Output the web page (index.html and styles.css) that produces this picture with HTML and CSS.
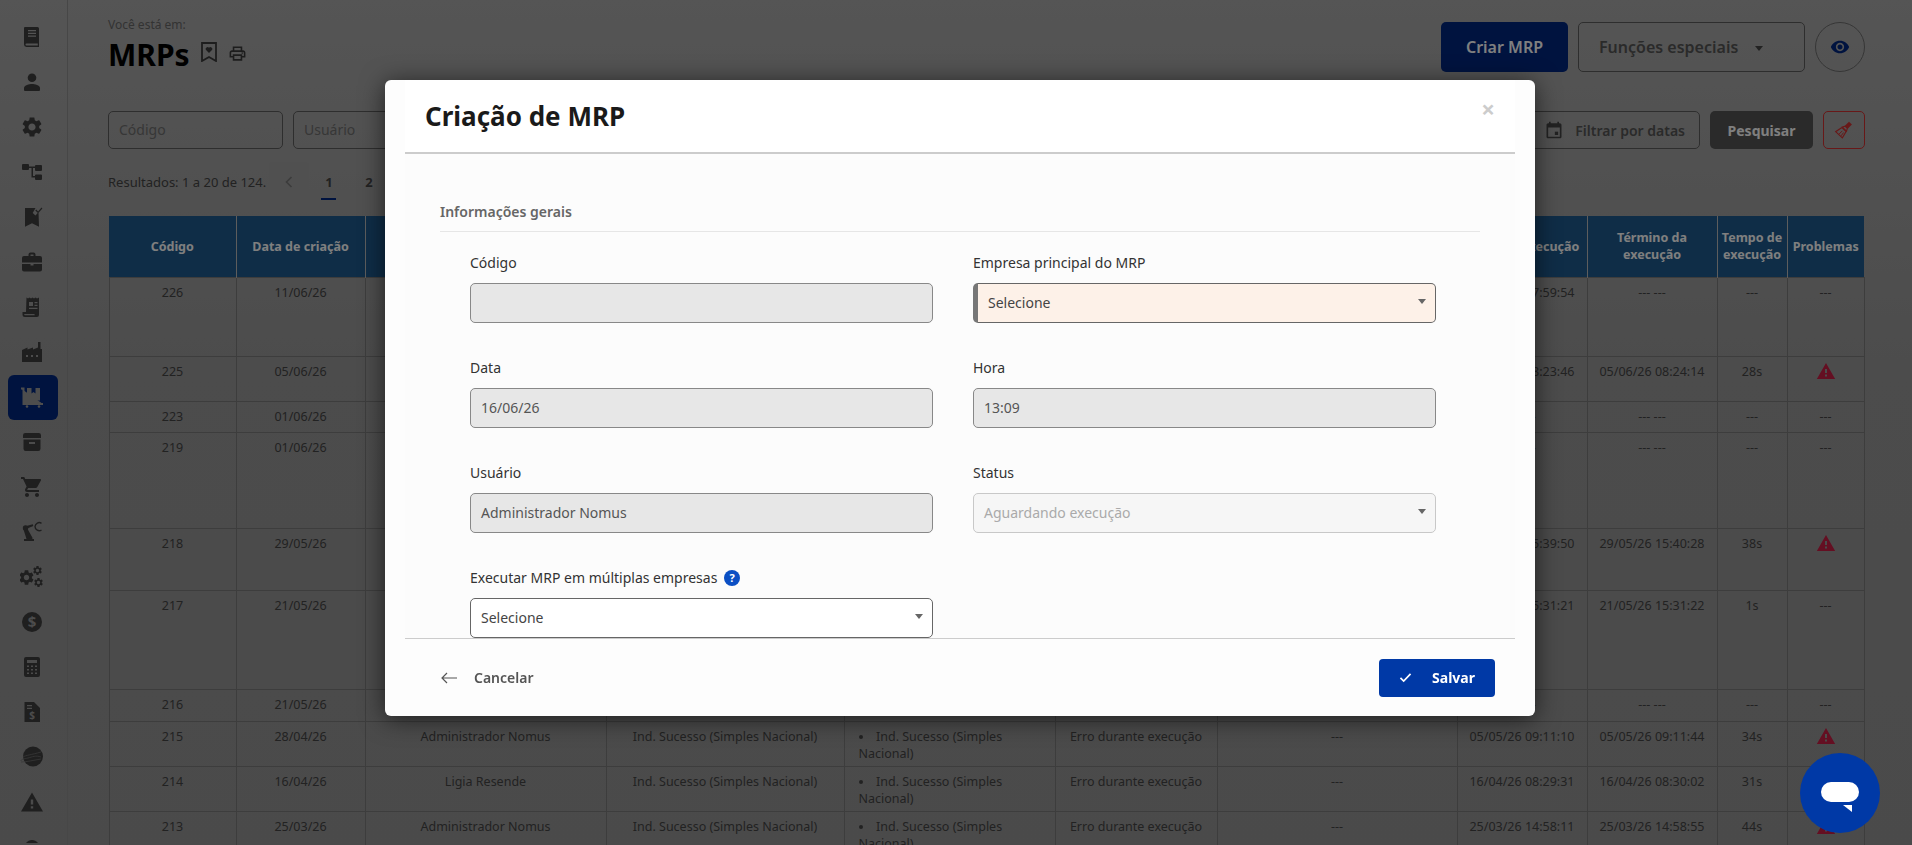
FILE: index.html
```html
<!DOCTYPE html>
<html>
<head>
<title>MRPs</title>
<link rel="stylesheet" href="styles.css">
</head>
<body>
<svg class="defs" width="0" height="0">
	<symbol id="i-gear" viewBox="0 0 24 24"><path d="M19.14 12.94c.04-.3.06-.61.06-.94 0-.32-.02-.64-.07-.94l2.03-1.58c.18-.14.23-.41.12-.61l-1.92-3.32c-.12-.22-.37-.29-.59-.22l-2.39.96c-.5-.38-1.03-.7-1.62-.94l-.36-2.54c-.04-.24-.24-.41-.48-.41h-3.84c-.24 0-.43.17-.47.41l-.36 2.54c-.59.24-1.13.57-1.62.94l-2.39-.96c-.22-.08-.47 0-.59.22L2.74 8.87c-.12.21-.08.47.12.61l2.03 1.58c-.05.3-.09.63-.09.94s.02.64.07.94l-2.03 1.58c-.18.14-.23.41-.12.61l1.92 3.32c.12.22.37.29.59.22l2.39-.96c.5.38 1.03.7 1.62.94l.36 2.54c.05.24.24.41.48.41h3.84c.24 0 .44-.17.47-.41l.36-2.54c.59-.24 1.13-.56 1.62-.94l2.39.96c.22.08.47 0 .59-.22l1.92-3.32c.12-.22.07-.47-.12-.61l-2.01-1.58zM12 15.6c-1.98 0-3.6-1.62-3.6-3.6s1.62-3.6 3.6-3.6 3.6 1.62 3.6 3.6-1.62 3.6-3.6 3.6z"/></symbol>
	<symbol id="i-warn" viewBox="0 0 24 24"><path d="M12 2.5 1 21.5h22zM13.2 18.5h-2.4v-2.3h2.4zm0-4h-2.4V9.5h2.4z"/></symbol>
</svg>

<div class="page">
	<nav class="sidebar">
		<a class="nav-item"><svg viewBox="0 0 24 24"><path d="M5 2h12.5A1.5 1.5 0 0 1 19 3.5V22H6.5a2.5 2.5 0 0 1-2.5-2.4V3a1 1 0 0 1 1-1zm3 3v1.2h8V5zm0 2.8V9h8V7.8zm0 2.8v1.2h8v-1.2zM6.5 18.6a1 1 0 0 0 0 2H17.800v-2z"/></svg></a>
		<a class="nav-item"><svg viewBox="0 0 24 24"><circle cx="12" cy="7.800" r="4.300"/><path d="M4 20v-2c0-2.700 5.300-4 8-4s8 1.300 8 4v2a1 1 0 0 1-1 1H5a1 1 0 0 1-1-1z"/></svg></a>
		<a class="nav-item"><svg viewBox="0 0 24 24"><use href="#i-gear"/></svg></a>
		<a class="nav-item"><svg viewBox="0 0 24 24"><path d="M3 4h5a1 1 0 0 1 1 1v1.500h6V6a1 1 0 0 1 1-1h5a1 1 0 0 1 1 1v4a1 1 0 0 1-1 1h-5a1 1 0 0 1-1-1V8H13v8h2v-.5a1 1 0 0 1 1-1h5a1 1 0 0 1 1 1V19a1 1 0 0 1-1 1h-5a1 1 0 0 1-1-1v-1.500h-3.500V8H9v1a1 1 0 0 1-1 1H3a1 1 0 0 1-1-1V5a1 1 0 0 1 1-1z"/></svg></a>
		<a class="nav-item"><svg viewBox="0 0 24 24"><path d="M5 3h10.500l-2.800 5 2.800 2.500 3-3.500L19 21.800l-7-3.600-7 3.600zM16.200 4.600l1.900 1.900 3.400-3.900.9.800-4.300 4.900-2.800-2.800z"/></svg></a>
		<a class="nav-item"><svg viewBox="0 0 24 24"><path d="M8.500 6V4.500A2 2 0 0 1 10.500 2.500h3a2 2 0 0 1 2 2V6H20a2 2 0 0 1 2 2v4.500H2V8a2 2 0 0 1 2-2zm2-1.500V6h3V4.500zM2 14h8.500v1.500h3V14H22v5.500a2 2 0 0 1-2 2H4a2 2 0 0 1-2-2z"/></svg></a>
		<a class="nav-item"><svg viewBox="0 0 24 24"><path d="M6.500 2.500 8 3.500l1.500-1 1.500 1 1.500-1 1.500 1 1.500-1 1.500 1 2-1V20a2 2 0 0 1-2 2H5a2.500 2.500 0 0 1-2.500-2.500V17H6zM9 7v4h4V7zm5.500 0v1.300h3V7zm0 2.700V11h3V9.700zM9 12.800v1.300h8.500v-1.300zm-4.800 6.100c0 .6.400 1.300 1.300 1.300h9.300a2 2 0 0 1-.3-1.300z"/></svg></a>
		<a class="nav-item"><svg viewBox="0 0 24 24"><path d="M18 2h2.500v7H22v13H2V10l5.500-2.500v2L13 7.500v2L18 7.500zM6 15v2h2v-2zm5 0v2h2v-2zm5 0v2h2v-2z"/></svg></a>
		<a class="nav-item nav-active"><svg viewBox="0 0 24 24" fill="none" stroke="currentColor" stroke-width="2"><path d="M1 3.500h2.500v15.500H23"/><circle cx="7" cy="21.500" r="1.300" fill="currentColor" stroke="none"/><circle cx="19" cy="21.500" r="1.300" fill="currentColor" stroke="none"/><path d="M7 3h13v12.500H7zM11.500 3v5.500l2-1.500 2 1.500V3" fill="currentColor" stroke="none"/></svg></a>
		<a class="nav-item"><svg viewBox="0 0 24 24"><path d="M3 5.200A2.200 2.200 0 0 1 5.200 3h13.600A2.200 2.200 0 0 1 21 5.200V8H3zM3.500 9.500h17v9.300a2.200 2.200 0 0 1-2.200 2.200H5.700a2.200 2.200 0 0 1-2.200-2.200zM9 12v2h6v-2z"/></svg></a>
		<a class="nav-item"><svg viewBox="0 0 24 24"><path d="M7 18c-1.100 0-1.990.9-1.990 2S5.900 22 7 22s2-.9 2-2-.9-2-2-2zM1 2v2h2l3.600 7.590-1.350 2.450c-.16.28-.25.61-.25.96 0 1.100.9 2 2 2h12v-2H7.420c-.14 0-.25-.11-.25-.25l.03-.12.9-1.630h7.450c.75 0 1.410-.41 1.750-1.030l3.580-6.490c.08-.14.12-.31.12-.48 0-.55-.45-1-1-1H5.210l-.94-2H1zm16 16c-1.100 0-1.990.9-1.990 2s.89 2 1.990 2 2-.9 2-2-.9-2-2-2z"/></svg></a>
		<a class="nav-item"><svg viewBox="0 0 24 24"><path d="M4 21v-2h2.500L3.500 9.500a2.300 2.300 0 0 1 1.800-3.300l7.500-2 .5 1.900-6 2.300 4.200 7.600.9 1.500V19H14v2z"/><circle cx="5.500" cy="8" r="2.700"/><path d="M21.500 3.300A4.200 4.200 0 0 0 15 6.500a4.200 4.200 0 0 0 6.500 3.500" fill="none" stroke="currentColor" stroke-width="1.400"/></svg></a>
		<a class="nav-item"><svg viewBox="0 0 24 24"><use href="#i-gear" x="-2.500" y="3.500" width="18" height="18"/><use href="#i-gear" x="12" y="0" width="11" height="11"/><use href="#i-gear" x="13" y="12" width="11" height="11"/></svg></a>
		<a class="nav-item"><svg viewBox="0 0 24 24"><circle cx="12" cy="12" r="10"/><text class="nav-dollar" x="12" y="17" text-anchor="middle">$</text></svg></a>
		<a class="nav-item"><svg viewBox="0 0 24 24"><path d="M6 2h12a2 2 0 0 1 2 2v16a2 2 0 0 1-2 2H6a2 2 0 0 1-2-2V4a2 2 0 0 1 2-2zm1 3v3h10V5zm0 5.500V12h2v-1.500zm4 0V12h2v-1.500zm4 0V12h2v-1.500zM7 14v1.500h2V14zm4 0v1.500h2V14zm4 0v1.500h2V14zM7 17.500V19h2v-1.500zm4 0V19h2v-1.500zm4 0V19h2v-1.500z"/></svg></a>
		<a class="nav-item"><svg viewBox="0 0 24 24"><path d="M4.500 2H14l6 6v14H4.500zM7 5v1.300h5V5zm0 2.800v1.300h5V7.800z"/><text class="nav-file-dollar" x="12.200" y="19" text-anchor="middle">$</text></svg></a>
		<a class="nav-item"><svg viewBox="0 0 24 24"><circle cx="13" cy="11.500" r="10"/><path d="M1 16c0-2 3-2 7-3s8-3 13-1" fill="none" stroke="#6e6e6e" stroke-width=".8"/><path d="M3 12c3-2 8-2 18-5M1 17c5 0 14-2 20-3" fill="none" stroke="#6e6e6e" stroke-width=".8"/></svg></a>
		<a class="nav-item"><svg viewBox="0 0 24 24"><use href="#i-warn"/></svg></a>
		<a class="nav-item"><svg viewBox="0 0 24 24"><path d="M6 8c3-4 9-4 12 0z"/></svg></a>
	</nav>

	<main class="content">
		<header class="top">
			<div class="title-block">
				<div class="breadcrumb">Você está em:</div>
				<div class="title-row">
					<h1>MRPs</h1>
					<svg class="ico-bookmark" viewBox="0 0 16 20"><path d="M1 1h14v18l-7-4-7 4z" fill="none" stroke="currentColor" stroke-width="1.800"/><path d="M8 11 4.800 7.800a1.900 1.900 0 0 1 3.200-2 1.900 1.900 0 0 1 3.200 2z"/></svg>
					<svg class="ico-print" viewBox="0 0 24 24"><path d="M19 8h-1V3H6v5H5c-1.660 0-3 1.340-3 3v6h4v4h12v-4h4v-6c0-1.660-1.340-3-3-3zM8 5h8v3H8V5zm8 12v2H8v-4h8v2zm2-2v-2H6v2H4v-4c0-.55.45-1 1-1h14c.55 0 1 .45 1 1v4h-2z"/><circle cx="18" cy="11.500" r="1"/></svg>
				</div>
			</div>
			<div class="top-actions">
				<button class="btn btn-navy">Criar MRP</button>
				<button class="btn btn-outline">Funções especiais <span class="caret"></span></button>
				<button class="btn-eye"><svg viewBox="0 0 24 24"><path d="M12 4.500C7 4.500 2.730 7.610 1 12c1.730 4.390 6 7.500 11 7.500s9.270-3.110 11-7.500c-1.730-4.390-6-7.500-11-7.500zM12 17c-2.760 0-5-2.240-5-5s2.240-5 5-5 5 2.240 5 5-2.240 5-5 5zm0-8c-1.660 0-3 1.340-3 3s1.340 3 3 3 3-1.340 3-3-1.340-3-3-3z"/></svg></button>
			</div>
		</header>

		<div class="filters">
			<div class="filter-input">Código</div>
			<div class="filter-input">Usuário</div>
			<button class="btn-date"><svg viewBox="0 0 24 24"><path d="M19 4h-1V2h-2v2H8V2H6v2H5C3.900 4 3 4.900 3 6v14c0 1.100.9 2 2 2h14c1.100 0 2-.9 2-2V6c0-1.100-.9-2-2-2zm0 16H5V9h14v11z"/><path d="M13 14h4v4h-4z"/></svg>Filtrar por datas</button>
			<button class="btn-search">Pesquisar</button>
			<button class="btn-clear"><svg viewBox="0 0 24 24"><path d="m13 7 5-5 3.500 3.500-5 5z" fill="currentColor"/><path d="M13.500 7.500 16 10l-1 3.500-5-5zM9.500 9 14.500 14 10 21.500 2 14z" fill="none" stroke="currentColor" stroke-width="1.400"/><path d="m6 17 4-4M8.500 19l3-4" fill="none" stroke="currentColor" stroke-width="1.200"/></svg></button>
		</div>

		<div class="results">
			<span class="results-text">Resultados: 1 a 20 de 124.</span>
			<div class="pager">
				<span class="page-prev"><svg viewBox="0 0 10 14"><path d="M7.500 2 2.500 7l5 5" fill="none" stroke="currentColor" stroke-width="1.600"/></svg></span>
				<span class="page-num page-current">1</span>
				<span class="page-num">2</span>
			</div>
		</div>

		<table class="grid">
			<colgroup>
				<col class="c1"><col class="c2"><col class="c3"><col class="c4"><col class="c5"><col class="c6"><col class="c7"><col class="c8"><col class="c8"><col class="c9"><col class="c10">
			</colgroup>
			<thead>
				<tr><th>Código</th><th>Data de criação</th><th>Usuário</th><th>Empresa principal</th><th>Empresas</th><th>Status</th><th>Observações</th><th class="one-line">Início da execução</th><th>Término da execução</th><th>Tempo de execução</th><th>Problemas</th></tr>
			</thead>
			<tbody>
				<tr class="r79"><td>226</td><td>11/06/26</td><td></td><td></td><td></td><td></td><td></td><td>11/06/26 07:59:54</td><td>--- ---</td><td>---</td><td>---</td></tr>
				<tr class="r45"><td>225</td><td>05/06/26</td><td></td><td></td><td></td><td></td><td></td><td>05/06/26 08:23:46</td><td>05/06/26 08:24:14</td><td>28s</td><td><svg class="warn"><use href="#i-warn"/></svg></td></tr>
				<tr class="r31"><td>223</td><td>01/06/26</td><td></td><td></td><td></td><td></td><td></td><td>--- ---</td><td>--- ---</td><td>---</td><td>---</td></tr>
				<tr class="r96"><td>219</td><td>01/06/26</td><td></td><td></td><td></td><td></td><td></td><td>--- ---</td><td>--- ---</td><td>---</td><td>---</td></tr>
				<tr class="r62"><td>218</td><td>29/05/26</td><td></td><td></td><td></td><td></td><td></td><td>29/05/26 15:39:50</td><td>29/05/26 15:40:28</td><td>38s</td><td><svg class="warn"><use href="#i-warn"/></svg></td></tr>
				<tr class="r99"><td>217</td><td>21/05/26</td><td></td><td></td><td></td><td></td><td></td><td>21/05/26 15:31:21</td><td>21/05/26 15:31:22</td><td>1s</td><td>---</td></tr>
				<tr class="r32"><td>216</td><td>21/05/26</td><td></td><td></td><td></td><td></td><td></td><td>--- ---</td><td>--- ---</td><td>---</td><td>---</td></tr>
				<tr class="r45"><td>215</td><td>28/04/26</td><td>Administrador Nomus</td><td>Ind. Sucesso (Simples Nacional)</td><td class="cell-list"><ul><li>Ind. Sucesso (Simples Nacional)</li></ul></td><td>Erro durante execução</td><td>---</td><td>05/05/26 09:11:10</td><td>05/05/26 09:11:44</td><td>34s</td><td><svg class="warn"><use href="#i-warn"/></svg></td></tr>
				<tr class="r45"><td>214</td><td>16/04/26</td><td>Ligia Resende</td><td>Ind. Sucesso (Simples Nacional)</td><td class="cell-list"><ul><li>Ind. Sucesso (Simples Nacional)</li></ul></td><td>Erro durante execução</td><td>---</td><td>16/04/26 08:29:31</td><td>16/04/26 08:30:02</td><td>31s</td><td><svg class="warn"><use href="#i-warn"/></svg></td></tr>
				<tr class="r45"><td>213</td><td>25/03/26</td><td>Administrador Nomus</td><td>Ind. Sucesso (Simples Nacional)</td><td class="cell-list"><ul><li>Ind. Sucesso (Simples Nacional)</li></ul></td><td>Erro durante execução</td><td>---</td><td>25/03/26 14:58:11</td><td>25/03/26 14:58:55</td><td>44s</td><td><svg class="warn"><use href="#i-warn"/></svg></td></tr>
			</tbody>
		</table>
	</main>
</div>

<div class="overlay"></div>

<div class="modal">
	<div class="modal-head">
		<h2>Criação de MRP</h2>
		<span class="modal-close">×</span>
	</div>
	<div class="modal-body">
		<h3 class="section-title">Informações gerais</h3>
		<div class="form-grid">
			<div class="field">
				<label>Código</label>
				<div class="control control-off"></div>
			</div>
			<div class="field">
				<label>Empresa principal do MRP</label>
				<div class="control control-required">Selecione<span class="caret"></span></div>
			</div>
			<div class="field">
				<label>Data</label>
				<div class="control control-off">16/06/26</div>
			</div>
			<div class="field">
				<label>Hora</label>
				<div class="control control-off">13:09</div>
			</div>
			<div class="field">
				<label>Usuário</label>
				<div class="control control-off">Administrador Nomus</div>
			</div>
			<div class="field">
				<label>Status</label>
				<div class="control control-muted">Aguardando execução<span class="caret"></span></div>
			</div>
			<div class="field">
				<label>Executar MRP em múltiplas empresas <span class="help">?</span></label>
				<div class="control">Selecione<span class="caret"></span></div>
			</div>
		</div>
	</div>
	<div class="modal-foot">
		<a class="btn-cancel"><svg viewBox="0 0 16 12"><path d="M16 6H1.500M6 1 1 6l5 5" fill="none" stroke="currentColor" stroke-width="1.200"/></svg>Cancelar</a>
		<button class="btn-save"><svg viewBox="0 0 14 12"><path d="m1.500 6.500 3.500 3.500 7.500-8" fill="none" stroke="currentColor" stroke-width="1.800"/></svg>Salvar</button>
	</div>
</div>

<div class="chat">
	<span class="chat-pill"></span>
	<span class="chat-tail"></span>
</div>
</body>
</html>
```

FILE: styles.css
```css
* {
	box-sizing: border-box;
}
html, body {
	margin: 0;
	height: 100%;
	overflow: hidden;
}
body {
	font-family: "Noto Sans", "Open Sans", sans-serif;
	font-size: 14px;
	color: #444;
}
button {
	font-family: inherit;
	cursor: pointer;
}
.defs {
	position: absolute;
}

/* page under the dialog: colours are double the seen value because of the overlay */
.page {
	display: flex;
	height: 845px;
	overflow: hidden;
	background: linear-gradient(#aaa, #989898 45%, #959595);
}
.overlay {
	position: fixed;
	top: 0;
	left: 0;
	right: 0;
	bottom: 0;
	background: rgba(0, 0, 0, 0.5);
}
.sidebar {
	width: 68px;
	flex: none;
	padding: 14.5px 0 0 8px;
	border-right: 1px solid #8e8e8e;
	color: #3e3e3e;
}
.nav-item {
	display: flex;
	align-items: center;
	justify-content: center;
	width: 50px;
	height: 45px;
	padding-right: 3px;
}
.nav-item svg {
	width: 24px;
	height: 24px;
	fill: currentColor;
}
.nav-active {
	background: #00267f;
	border-radius: 6px;
	color: #9a9a9a;
}
.nav-dollar {
	font-size: 15px;
	font-weight: 700;
	fill: #989898;
}
.nav-file-dollar {
	font-size: 10px;
	font-weight: 700;
	fill: #989898;
}
.content {
	flex: 1;
	min-width: 0;
	padding: 0 47px 0 40px;
}

/* top */
.top {
	display: flex;
	justify-content: space-between;
	padding-top: 16px;
}
.breadcrumb {
	font-size: 12px;
	line-height: 18px;
	color: #666;
}
.title-row {
	display: flex;
	align-items: flex-start;
	color: #3a3a3a;
}
.title-row h1 {
	margin: 0;
	font-size: 30px;
	line-height: 42px;
	font-weight: 700;
	color: #000;
}
.ico-bookmark {
	width: 16px;
	height: 20px;
	margin: 8px 0 0 11px;
	fill: currentColor;
}
.ico-print {
	width: 19px;
	height: 19px;
	margin: 10px 0 0 11px;
	fill: currentColor;
}
.top-actions {
	display: flex;
	gap: 10px;
	margin-top: 6px;
}
.btn {
	height: 50px;
	border-radius: 5px;
	font-size: 16px;
	font-weight: 600;
}
.btn-navy {
	width: 127px;
	background: #00267f;
	border: 0;
	color: #fff;
}
.btn-outline {
	width: 227px;
	background: transparent;
	border: 1px solid #5c5c5c;
	color: #555;
	text-align: left;
	padding-left: 20px;
}
.btn-outline .caret {
	margin-left: 13px;
	border-top-color: #444;
	position: relative;
	top: -2px;
}
.caret {
	display: inline-block;
	width: 0;
	height: 0;
	border-left: 4.5px solid transparent;
	border-right: 4.5px solid transparent;
	border-top: 5px solid #666;
}
.btn-eye {
	width: 50px;
	height: 50px;
	padding: 0;
	border-radius: 50%;
	background: transparent;
	border: 1px solid #6c6c6c;
	color: #00267f;
	display: flex;
	align-items: center;
	justify-content: center;
}
.btn-eye svg {
	width: 20px;
	height: 20px;
	fill: currentColor;
}

/* filters */
.filters {
	display: flex;
	gap: 10px;
	margin-top: 35px;
	height: 38px;
}
.filter-input {
	width: 175px;
	border: 1px solid #5c5c5c;
	border-radius: 5px;
	padding: 0 10px;
	line-height: 36px;
	color: #6e6e6e;
}
.filter-input + .filter-input {
	margin-right: auto;
}
.btn-date {
	display: flex;
	align-items: center;
	justify-content: flex-end;
	gap: 11px;
	width: 200px;
	padding: 0 14px 0 0;
	background: transparent;
	border: 1px solid #5c5c5c;
	border-radius: 5px;
	font-size: 14px;
	font-weight: 600;
	color: #555;
}
.btn-date svg {
	width: 20px;
	height: 20px;
	fill: #444;
}
.btn-search {
	width: 103px;
	background: #545454;
	border: 0;
	border-radius: 5px;
	font-size: 14px;
	font-weight: 700;
	color: #fff;
}
.btn-clear {
	width: 42px;
	padding: 0;
	background: transparent;
	border: 1px solid #d03030;
	border-radius: 5px;
	color: #d03030;
	display: flex;
	align-items: center;
	justify-content: center;
}
.btn-clear svg {
	width: 20px;
	height: 20px;
}

/* results */
.results {
	display: flex;
	align-items: center;
	height: 40px;
	margin-top: 13px;
	font-size: 13px;
}
.results-text {
	width: 161px;
	color: #444;
}
.pager {
	display: flex;
}
.page-prev, .page-num {
	display: flex;
	align-items: center;
	justify-content: center;
	width: 40px;
	height: 40px;
	font-weight: 700;
	color: #444;
	position: relative;
}
.page-prev {
	background: #a0a0a0;
	border-radius: 4px;
	color: #777;
}
.page-prev svg {
	width: 10px;
	height: 14px;
}
.page-current::after {
	content: "";
	position: absolute;
	left: 12px;
	right: 13px;
	bottom: 2px;
	height: 2px;
	background: #00267f;
}

/* table */
.grid {
	table-layout: fixed;
	width: 1756px;
	margin: 14px 0 0 0.5px;
	border-collapse: collapse;
	font-size: 12.5px;
	line-height: 17px;
}
.c1 { width: 127px; }
.c2 { width: 129px; }
.c3 { width: 241px; }
.c4 { width: 238px; }
.c5 { width: 211px; }
.c6 { width: 162px; }
.c7 { width: 240px; }
.c8 { width: 130px; }
.c9 { width: 70px; }
.c10 { width: 77px; }
.grid th {
	height: 61px;
	padding: 0 4px;
	background: #1e5a8e;
	color: #fff;
	font-size: 12.5px;
	font-weight: 700;
	border: 1px solid #bbb;
	border-top: 0;
	border-bottom: 0;
}
.grid th:first-child, .grid th:last-child {
	border-left: 0;
	border-right: 0;
}
.one-line {
	white-space: nowrap;
}
.grid td {
	padding: 6px 8px 0;
	vertical-align: top;
	text-align: center;
	border: 1px solid #7a7a7a;
	color: #444;
}
.r31 td { height: 31px; }
.r32 td { height: 32px; }
.r45 td { height: 45px; }
.r62 td { height: 62px; }
.r79 td { height: 79px; }
.r96 td { height: 96px; }
.r99 td { height: 99px; }
.grid .cell-list {
	text-align: left;
	padding-left: 14px;
}
.cell-list ul {
	margin: 0;
	padding: 0;
	list-style-position: inside;
}
.warn {
	width: 22px;
	height: 20px;
	fill: #c81e45;
	display: block;
	margin: -2px auto 0;
}

/* dialog */
.modal {
	position: absolute;
	left: 385px;
	top: 80px;
	width: 1150px;
	height: 636px;
	padding: 0 20px;
	display: flex;
	flex-direction: column;
	background: #fdfdfd;
	border-radius: 6px;
	box-shadow: 0 3px 24px rgba(0, 0, 0, 0.6);
}
.modal-head {
	flex: none;
	height: 74px;
	display: flex;
	align-items: center;
	justify-content: space-between;
	padding: 0 20px 0 20px;
	background: #fff;
	border-bottom: 2px solid #ccc;
}
.modal-head h2 {
	margin: 0;
	font-size: 26px;
	font-weight: 700;
	color: #1a1a1a;
}
.modal-close {
	font-size: 24px;
	font-weight: 700;
	line-height: 24px;
	color: #ccc;
	margin-bottom: 14px;
}
.modal-body {
	flex: 1;
	min-height: 0;
	overflow-y: scroll;
	padding: 46px 35px 29px;
	background: #fcfcfc;
}
.modal-body::-webkit-scrollbar {
	width: 15px;
}
.modal-body::-webkit-scrollbar-track {
	background: #e7e7e7;
}
.modal-body::-webkit-scrollbar-thumb {
	background: #bbb;
	border: 2px solid #e7e7e7;
	border-radius: 8px;
}
.section-title {
	margin: 0;
	padding-bottom: 6px;
	height: 32px;
	font-size: 14px;
	line-height: 24px;
	font-weight: 600;
	color: #666;
	border-bottom: 1px solid #e6e6e6;
}
.form-grid {
	display: grid;
	grid-template-columns: 463px 463px;
	column-gap: 40px;
	row-gap: 35px;
	padding: 21px 30px 0;
}
.field label {
	display: block;
	height: 30px;
	line-height: 20px;
	font-size: 14px;
	color: #333;
}
.control {
	position: relative;
	height: 40px;
	padding: 0 10px;
	line-height: 38px;
	background: #fff;
	border: 1px solid #666;
	border-radius: 5px;
	font-size: 14px;
	color: #444;
}
.control .caret {
	position: absolute;
	right: 9px;
	top: 15px;
}
.control-off {
	background: #e7e7e7;
	border-color: #888;
	color: #555;
}
.control-muted {
	background: #f6f6f6;
	border-color: #c8c8c8;
	color: #aaa;
}
.control-required {
	background: #fdf1e8;
	border-left: 5px solid #777;
}
.help {
	display: inline-block;
	width: 16px;
	height: 16px;
	margin-left: 3px;
	border-radius: 50%;
	background: #0b4fc4;
	color: #fff;
	font-size: 11px;
	font-weight: 700;
	line-height: 16px;
	text-align: center;
	vertical-align: 1px;
}
.modal-foot {
	flex: none;
	height: 78px;
	display: flex;
	align-items: center;
	justify-content: space-between;
	padding: 0 20px 0 36px;
	border-top: 1px solid #ccc;
}
.btn-cancel {
	display: flex;
	align-items: center;
	gap: 17px;
	font-weight: 600;
	color: #555;
}
.btn-cancel svg {
	width: 16px;
	height: 12px;
}
.btn-save {
	display: flex;
	align-items: center;
	justify-content: center;
	gap: 20px;
	width: 116px;
	height: 38px;
	padding: 0;
	background: #0039a6;
	border: 0;
	border-radius: 4px;
	color: #fff;
	font-size: 14px;
	font-weight: 700;
}
.btn-save svg {
	width: 13px;
	height: 11px;
}

/* chat bubble */
.chat {
	position: absolute;
	left: 1800px;
	top: 753px;
	width: 80px;
	height: 80px;
	border-radius: 50%;
	background: #0039a6;
}
.chat-pill {
	position: absolute;
	left: 21px;
	top: 29px;
	width: 38px;
	height: 20px;
	background: #fff;
	border-radius: 10px;
}
.chat-tail {
	position: absolute;
	left: 43px;
	top: 52px;
	border-top: 7px solid #fff;
	border-left: 9px solid transparent;
}
```
